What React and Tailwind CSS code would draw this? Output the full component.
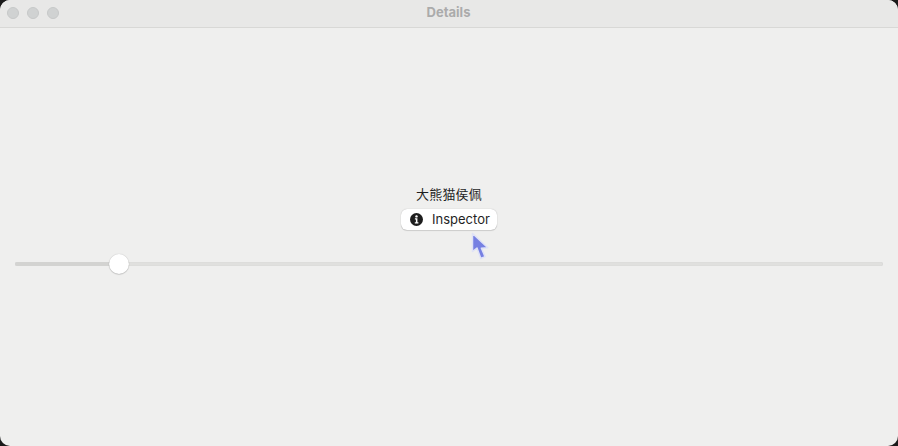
import { useState } from "react";

const FONT = { fontFamily: '"Inter", "Noto Sans CJK SC", sans-serif' };

const InfoIcon = () => (
  <svg width="13" height="13" viewBox="0 0 13 13">
    <circle cx="6.5" cy="6.5" r="6.5" fill="#1d1d1d" />
    <circle cx="6.5" cy="3.4" r="1.2" fill="#fff" />
    <path d="M4.9 5.3h2.5v4h1v1.1H4.8V9.3h1.1V6.4h-1z" fill="#fff" />
  </svg>
);

const Cursor = () => (
  <svg width="20" height="30" viewBox="0 0 20 30" className="absolute left-[470px] top-[231px]">
    <path
      d="M2.5 2.5 L2.5 20.5 L7 17 L10.8 27.5 L15 25.6 L11.4 17.2 L17.8 16.8 Z"
      fill="#7680e2"
      stroke="#dfe2f7"
      strokeWidth="1.5"
      strokeLinejoin="round"
    />
  </svg>
);

export default function App() {
  const [value, setValue] = useState(12);

  return (
    <div className="relative h-[446px] w-[898px] overflow-hidden bg-[#1a1a1a]" style={FONT}>
      <div className="flex h-full flex-col overflow-hidden rounded-[10px] bg-[#efefee]">
        {/* title bar */}
        <div className="relative flex h-[28px] shrink-0 items-center justify-center border-b border-[#d8d8d6] bg-[#e8e8e7]">
          <div className="absolute left-[7px] top-[7px] flex gap-[8px]">
            <span className="h-[12px] w-[12px] rounded-full border border-[#c6c8c8] bg-[#d0d2d2]" />
            <span className="h-[12px] w-[12px] rounded-full border border-[#c6c8c8] bg-[#d0d2d2]" />
            <span className="h-[12px] w-[12px] rounded-full border border-[#c6c8c8] bg-[#d0d2d2]" />
          </div>
          <span className="mb-[2px] mr-[1px] text-[13px] font-bold text-[#ababab]">Details</span>
        </div>

        {/* content */}
        <div className="flex flex-1 flex-col items-center justify-center px-[15px] pb-[13px]">
          <p className="text-[13px] leading-[16px] tracking-[0.2px] text-[#1f1f1f]">大熊猫侯佩</p>
          <button className="mt-[7px] flex h-[21px] w-[96px] items-center gap-[9px] rounded-[6px] bg-white pl-[9px] text-[13px] text-[#1f1f1f] shadow-[0_0_1px_rgba(0,0,0,0.3),0_1px_1px_rgba(0,0,0,0.12)]">
            <InfoIcon />
            Inspector
          </button>

          <div className="relative mt-[23px] flex h-[22px] w-full items-center">
            <div className="h-[4px] w-full rounded-full bg-[#e0e0de] shadow-[inset_0_0_1px_rgba(0,0,0,0.12)]">
              <div
                className="h-full rounded-full bg-[#d3d3d1]"
                style={{ width: `${value}%` }}
              />
            </div>
            <input
              type="range"
              value={value}
              onChange={(e) => setValue(Number(e.target.value))}
              className="absolute inset-0 opacity-0"
            />
            <span className="pointer-events-none absolute left-[94px] top-[1px] h-[20px] w-[20px] rounded-full bg-white shadow-[0_0_1px_rgba(0,0,0,0.3),0_1px_1px_rgba(0,0,0,0.12)]" />
          </div>
        </div>
      </div>
      <Cursor />
    </div>
  );
}
